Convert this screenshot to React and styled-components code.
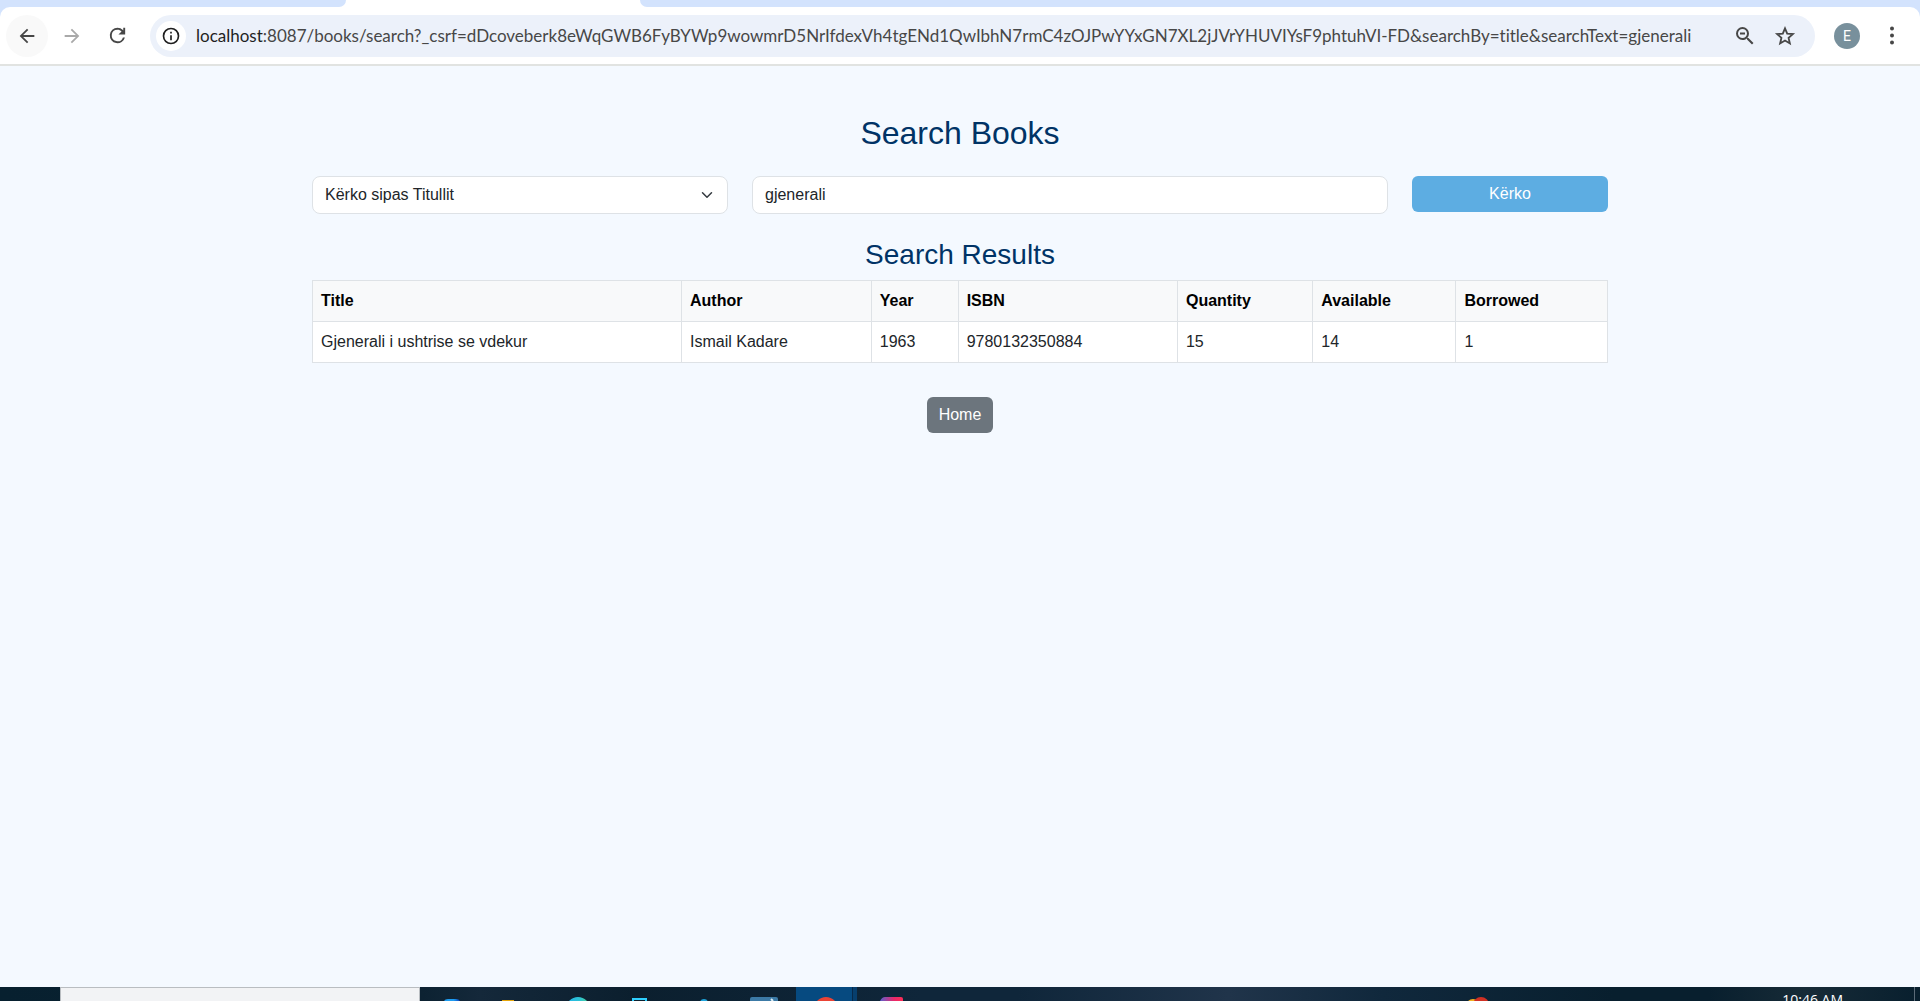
import React from "react";
import styled, { createGlobalStyle } from "styled-components";

const GlobalStyle = createGlobalStyle`
  *, *::before, *::after { box-sizing: border-box; }
  body {
    margin: 0;
    background: #f4f9ff;
    color: #212529;
    font-family: "Liberation Sans", Arial, sans-serif;
    font-size: 16px;
    line-height: 24px;
  }
`;

const Screen = styled.div`
  display: flex;
  flex-direction: column;
  height: 100vh;
  overflow: hidden;
`;

const TabStrip = styled.div`
  display: grid;
  grid-template-columns: 346px 294px 1fr;
  height: 7px;
  background: #fff;
`;

const StripPart = styled.div`
  background: ${(p) => (p.$active ? "#fff" : "#d3e3fd")};
  border-radius: ${(p) => p.$radius || "0"};
`;

const ToolbarWrap = styled.div`
  background: #d3e3fd;
`;

const Toolbar = styled.header`
  display: flex;
  align-items: center;
  height: 59px;
  padding: 8px 12px 8px 6px;
  background: #fff;
  border-bottom: 2px solid #e1e3e1;
  border-radius: 10px 10px 0 0;
`;

const ToolButton = styled.button`
  display: flex;
  align-items: center;
  justify-content: center;
  flex: none;
  width: ${(p) => p.$w || 42}px;
  height: 42px;
  margin: 0;
  padding: 0;
  border: 0;
  border-radius: 21px;
  background: ${(p) => (p.$hover ? "#f9f9f9" : "transparent")};
  color: ${(p) => p.$color || "#474747"};
`;

const NavButtons = styled.nav`
  display: flex;
  gap: 3px;
`;

const AddressBar = styled.div`
  display: flex;
  align-items: center;
  flex: 1;
  min-width: 0;
  height: 42px;
  margin-left: 12px;
  padding: 0 10px 0 6px;
  border-radius: 21px;
  background: #ecf1fa;
  font-family: Lato, "Open Sans", sans-serif;
  font-size: 17px;
  font-variant-ligatures: none;
  line-height: 26px;
`;

const SiteInfo = styled.button`
  display: flex;
  align-items: center;
  justify-content: center;
  flex: none;
  width: 30px;
  height: 30px;
  margin-right: 10px;
  padding: 0;
  border: 0;
  border-radius: 15px;
  background: #fff;
  color: #1f1f1f;
`;

const Host = styled.label`
  color: #1f1f1f;
`;

const AddressInput = styled.input`
  flex: 1;
  min-width: 0;
  height: 26px;
  padding: 0;
  border: 0;
  outline: 0;
  background: transparent;
  color: #474747;
  font: inherit;
  font-variant-ligatures: none;
`;

const Avatar = styled.button`
  flex: none;
  width: 26px;
  height: 26px;
  margin: 0 16px 0 19px;
  padding: 0;
  border: 0;
  border-radius: 13px;
  background: #78909c;
  color: #fff;
  font-family: Roboto, sans-serif;
  font-size: 14px;
  line-height: 26px;
`;

const Page = styled.main`
  flex: 1;
  min-height: 0;
  width: 100%;
  max-width: 1320px;
  margin: 0 auto;
  padding: 48px 12px;
  text-align: center;
`;

const Heading = styled.h1`
  margin: 0 0 24px;
  color: #003366;
  font-size: 32px;
  font-weight: 400;
  line-height: 38px;
`;

const SubHeading = styled.h2`
  margin: 0 0 8px;
  color: #003366;
  font-size: 28px;
  font-weight: 400;
  line-height: 34px;
`;

const SearchForm = styled.form`
  display: grid;
  grid-template-columns: repeat(12, 1fr);
  align-items: start;
  column-gap: 24px;
  margin-bottom: 24px;
`;

const Field = styled.div`
  grid-column: span ${(p) => p.$span};
  display: grid;
  align-items: center;
`;

const Select = styled.select`
  grid-area: 1 / 1;
  width: 100%;
  height: 38px;
  padding: 6px 36px 6px 12px;
  appearance: none;
  border: 1px solid #dee2e6;
  border-radius: 8px;
  background: #fff;
  color: #212529;
  font: inherit;
`;

const Chevron = styled.svg`
  grid-area: 1 / 1;
  justify-self: end;
  margin-right: 15px;
  pointer-events: none;
`;

const TextInput = styled.input`
  width: 100%;
  height: 38px;
  padding: 6px 12px;
  border: 1px solid #dee2e6;
  border-radius: 8px;
  background: #fff;
  color: #212529;
  font: inherit;
`;

const SubmitButton = styled.button`
  width: 100%;
  padding: 6px 12px;
  border: 0;
  border-radius: 6px;
  background: #5dade2;
  color: #fff;
  font: inherit;
`;

const Table = styled.table`
  width: 100%;
  margin-bottom: 34px;
  border-collapse: collapse;
  background: #fff;
  text-align: left;

  th,
  td {
    padding: 8px;
    border: 1px solid #dee2e6;
  }

  th {
    background: #f8f9fa;
    color: #000;
  }
`;

const HomeLink = styled.a`
  display: inline-block;
  padding: 6px 12px;
  border-radius: 6px;
  background: #6c757d;
  color: #fff;
  text-decoration: none;
`;

const Taskbar = styled.footer`
  display: flex;
  flex: none;
  height: 14px;
  overflow: hidden;
  background: linear-gradient(90deg, #07202f 0, #0c2232 22%, #14283a 25%, #0b1f2e 33%, #0f263a 48%, #0f263a 53%, #20344a 64%, #10283c 72%, #081f2e 84%, #081f2e 89%, #172b37 94%, #081f2e 100%);
`;

const TaskSearch = styled.input`
  flex: none;
  width: 360px;
  height: 40px;
  margin-left: 60px;
  padding: 0 12px;
  border: 1px solid #b9bdc1;
  border-radius: 0;
  background: #f2f3f5;
`;

const TaskIcons = styled.svg`
  flex: none;
`;

const Tray = styled.div`
  display: flex;
  flex: 1;
  justify-content: flex-end;
  gap: 71px;
  padding-right: 5px;
  color: #fff;
`;

const Clock = styled.time`
  padding-top: 3px;
  font-family: "Open Sans", "Noto Sans", sans-serif;
  font-size: 14px;
  line-height: 20px;
  white-space: nowrap;
`;

const ShowDesktop = styled.div`
  width: 1px;
  background: #5b6b78;
`;

const headers = ["Title", "Author", "Year", "ISBN", "Quantity", "Available", "Borrowed"];
const books = [["Gjenerali i ushtrise se vdekur", "Ismail Kadare", "1963", "9780132350884", "15", "14", "1"]];
const urlPath =
  ":8087/books/search?_csrf=dDcoveberk8eWqGWB6FyBYWp9wowmrD5NrIfdexVh4tgENd1QwIbhN7rmC4zOJPwYYxGN7XL2jJVrYHUVIYsF9phtuhVI-FD&searchBy=title&searchText=gjenerali";

function Icon({ size = 24, children }) {
  return (
    <svg width={size} height={size} viewBox="0 0 24 24" fill="currentColor" aria-hidden="true">
      {children}
    </svg>
  );
}

export default function App() {
  return (
    <>
      <GlobalStyle />
      <Screen>
        <TabStrip>
          <StripPart $radius="0 0 10px 0" />
          <StripPart $active />
          <StripPart $radius="0 0 0 10px" />
        </TabStrip>
        <ToolbarWrap>
          <Toolbar>
            <NavButtons>
              <ToolButton $hover aria-label="Back">
                <Icon size={22}>
                  <path d="M20 11H7.83l5.59-5.59L12 4l-8 8 8 8 1.41-1.41L7.83 13H20z" />
                </Icon>
              </ToolButton>
              <ToolButton $color="#a9a9a9" aria-label="Forward">
                <Icon size={22}>
                  <path d="M12 4l-1.41 1.41L16.17 11H4v2h12.17l-5.58 5.59L12 20l8-8z" />
                </Icon>
              </ToolButton>
              <ToolButton aria-label="Reload">
                <Icon size={23}>
                  <path d="M17.65 6.35A7.96 7.96 0 0 0 12 4a8 8 0 1 0 7.73 10h-2.08A6 6 0 1 1 12 6c1.66 0 3.14.69 4.22 1.78L13 11h7V4h-2v2.7z" />
                </Icon>
              </ToolButton>
            </NavButtons>
            <AddressBar>
              <SiteInfo aria-label="Site information">
                <Icon size={20}>
                  <path d="M11 7h2v2h-2zm0 4h2v6h-2zm1-9a10 10 0 1 0 0 20 10 10 0 0 0 0-20zm0 18a8 8 0 1 1 0-16 8 8 0 0 1 0 16z" />
                </Icon>
              </SiteInfo>
              <Host htmlFor="address">localhost</Host>
              <AddressInput id="address" defaultValue={urlPath} spellCheck={false} />
              <ToolButton $w={40} aria-label="Zoom">
                <Icon size={24}>
                  <path d="M15.5 14h-.79l-.28-.27A6.47 6.47 0 0 0 16 9.5 6.5 6.5 0 1 0 9.5 16c1.61 0 3.09-.59 4.23-1.57l.27.28v.79l5 4.99L20.49 19zm-6 0a4.5 4.5 0 1 1 0-9 4.5 4.5 0 0 1 0 9zM7 8.5h5v2H7z" />
                </Icon>
              </ToolButton>
              <ToolButton $w={40} aria-label="Bookmark this tab">
                <Icon size={22}>
                  <path
                    d="M12 3.6l2.4 5.8 6.2.5-4.7 4.1 1.4 6.1L12 16.9l-5.3 3.2 1.4-6.1-4.7-4.1 6.2-.5z"
                    fill="none"
                    stroke="currentColor"
                    strokeWidth="2"
                  />
                </Icon>
              </ToolButton>
            </AddressBar>
            <Avatar aria-label="Profile E">E</Avatar>
            <ToolButton $w={32} aria-label="Menu">
              <Icon>
                <circle cx="12" cy="4.5" r="2" />
                <circle cx="12" cy="11.5" r="2" />
                <circle cx="12" cy="18.5" r="2" />
              </Icon>
            </ToolButton>
          </Toolbar>
        </ToolbarWrap>

        <Page>
          <Heading>Search Books</Heading>
          <SearchForm onSubmit={(e) => e.preventDefault()}>
            <Field $span={4}>
              <Select aria-label="Search by" defaultValue="title">
                <option value="title">Kërko sipas Titullit</option>
              </Select>
              <Chevron width="12" height="12" viewBox="0 0 16 16" fill="none" aria-hidden="true">
                <path d="m2 5 6 6 6-6" stroke="#343a40" strokeWidth="2" strokeLinecap="round" strokeLinejoin="round" />
              </Chevron>
            </Field>
            <Field $span={6}>
              <TextInput aria-label="Search text" defaultValue="gjenerali" />
            </Field>
            <Field $span={2}>
              <SubmitButton type="submit">Kërko</SubmitButton>
            </Field>
          </SearchForm>

          <SubHeading>Search Results</SubHeading>
          <Table>
            <thead>
              <tr>
                {headers.map((h) => (
                  <th key={h} scope="col">{h}</th>
                ))}
              </tr>
            </thead>
            <tbody>
              {books.map((book) => (
                <tr key={book[3]}>
                  {book.map((value, i) => (
                    <td key={headers[i]}>{value}</td>
                  ))}
                </tr>
              ))}
            </tbody>
          </Table>
          <HomeLink href="#home">Home</HomeLink>
        </Page>

        <Taskbar>
          <TaskSearch aria-label="Taskbar search" />
          <TaskIcons width="1080" height="14" viewBox="420 0 1080 14" aria-hidden="true">
            <defs>
              <linearGradient id="edge" x1="0" x2="1">
                <stop offset="0" stopColor="#1fb6f0" />
                <stop offset="0.6" stopColor="#2fc3d0" />
                <stop offset="1" stopColor="#4fd88a" />
              </linearGradient>
              <linearGradient id="idea" x1="0" x2="1">
                <stop offset="0" stopColor="#5a5fd0" />
                <stop offset="0.6" stopColor="#e8296b" />
                <stop offset="1" stopColor="#ff2d55" />
              </linearGradient>
              <linearGradient id="code" x1="0" x2="1">
                <stop offset="0.6" stopColor="#1e9df1" />
                <stop offset="1" stopColor="#0a3fc0" />
              </linearGradient>
            </defs>
            <rect x="796" width="56" height="14" fill="#064a80" />
            <rect x="852" width="1" height="14" fill="#06294a" />
            <rect x="853" width="4" height="14" fill="#073f6e" />
            <path d="M444 14q1-2 4-2h8q3 0 4 2z" fill="url(#code)" />
            <rect x="502" y="13" width="12" height="1" fill="#e5a50a" />
            <circle cx="578" cy="22" r="12" fill="url(#edge)" />
            <path d="M633 14v-2h13v2" fill="none" stroke="#2fd0ff" strokeWidth="2" />
            <circle cx="704" cy="16" r="4" fill="#1fa5dc" />
            <rect x="750" y="10" width="28" height="6" rx="2" fill="#3c7aa6" />
            <path d="M771 12l2 2" stroke="#dcecf5" strokeWidth="2" />
            <circle cx="826" cy="22" r="12" fill="#ea4335" />
            <path d="M880 14q2-4 5-4h16q2 0 2 2v2z" fill="url(#idea)" />
            <circle cx="1473" cy="19" r="7" fill="#f2b01e" />
            <circle cx="1481" cy="18" r="8" fill="#d13124" />
          </TaskIcons>
          <Tray>
            <Clock>10:46 AM</Clock>
            <ShowDesktop />
          </Tray>
        </Taskbar>
      </Screen>
    </>
  );
}
